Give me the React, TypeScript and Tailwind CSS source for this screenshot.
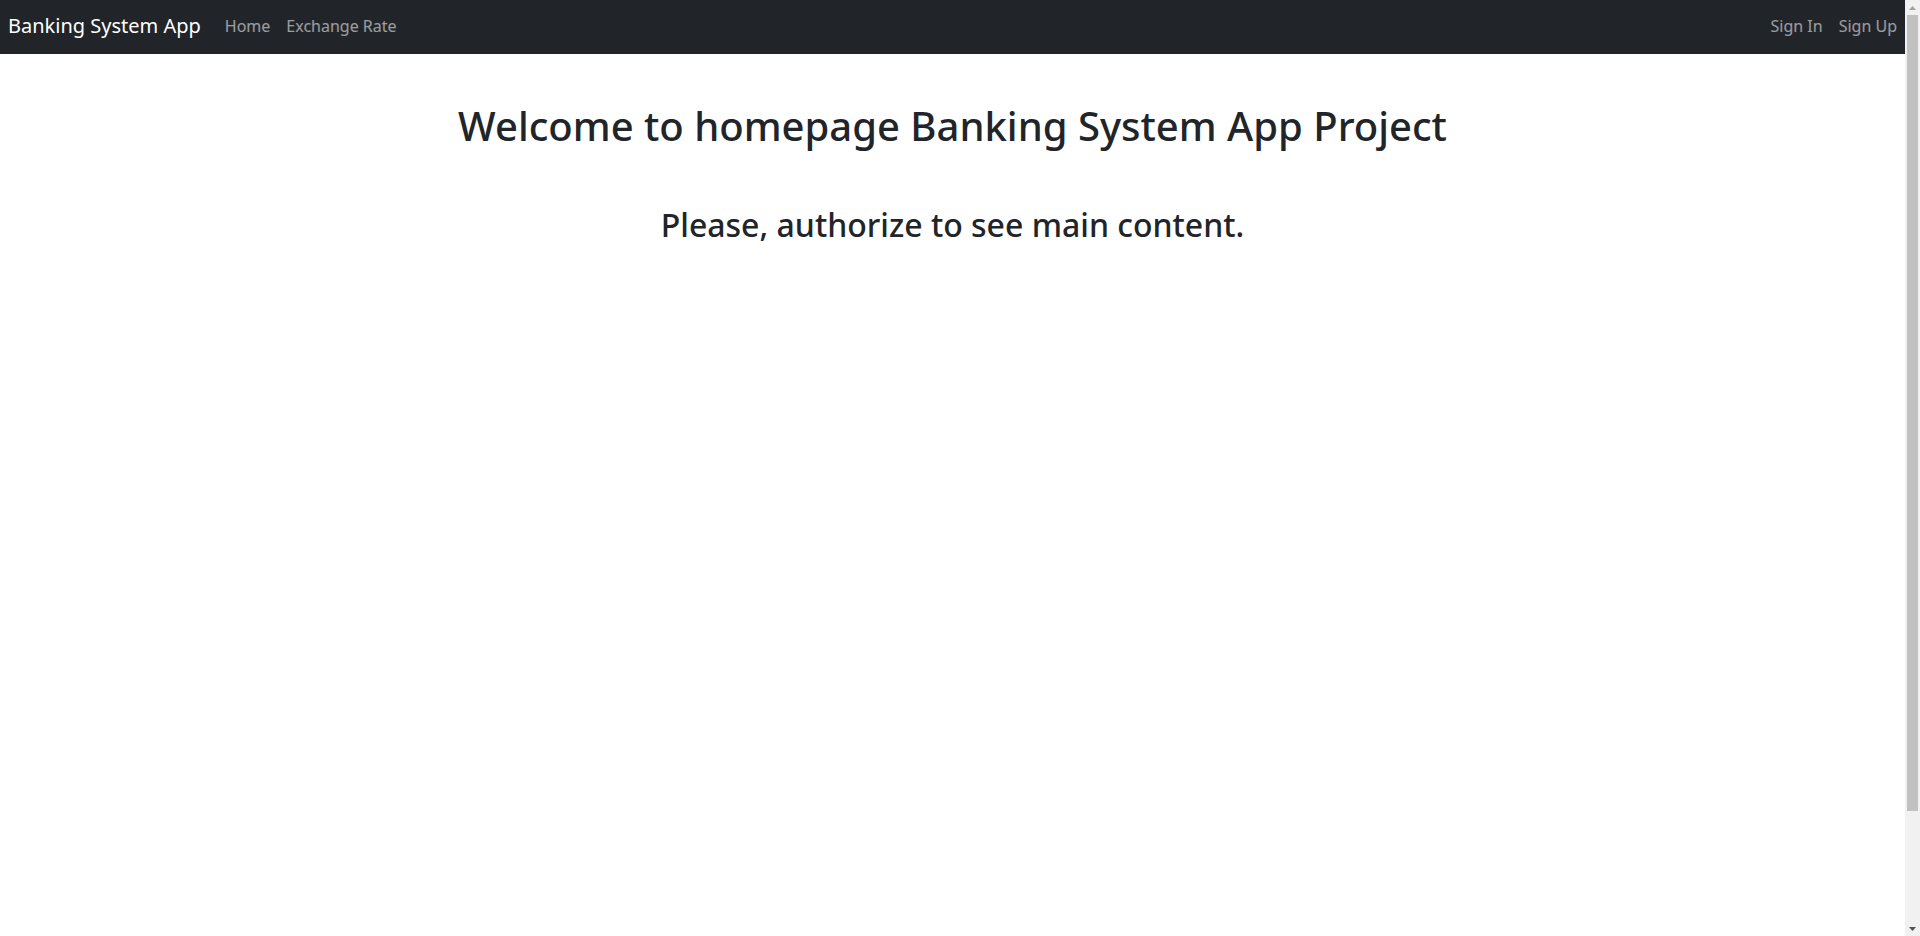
function Scrollbar() {
  return (
    <div className="w-[15px] h-screen shrink-0 bg-[#f1f1f1] flex flex-col">
      <div className="h-[15px] flex items-center justify-center">
        <svg width="7" height="4" viewBox="0 0 7 4"><path d="M3.5 0 L7 4 L0 4 Z" fill="#a3a3a3" /></svg>
      </div>
      <div className="flex-1 px-[2px]">
        <div className="h-[796px] bg-[#c1c1c1]" />
      </div>
      <div className="h-[15px] flex items-center justify-center">
        <svg width="7" height="4" viewBox="0 0 7 4"><path d="M0 0 L7 0 L3.5 4 Z" fill="#505050" /></svg>
      </div>
    </div>
  );
}

export default function App() {
  return (
    <div className="h-screen flex bg-white text-[#212529] overflow-hidden" style={{ fontFamily: '"Noto Sans", "Liberation Sans", sans-serif' }}>
      <div className="flex-1 min-w-0">
        <nav className="h-[54px] bg-[#212529] flex items-center justify-between px-2 pb-0.5">
          <div className="flex items-center">
            <a href="#" className="text-white text-[20px] mr-4 leading-[30px]">Banking System App</a>
            <a href="#" className="text-white/55 text-base px-2">Home</a>
            <a href="#" className="text-white/55 text-base px-2">Exchange Rate</a>
          </div>
          <div className="flex items-center">
            <a href="#" className="text-white/55 text-base px-2">Sign In</a>
            <a href="#" className="text-white/55 text-base pl-2">Sign Up</a>
          </div>
        </nav>
        <main className="text-center">
          <h1 className="mt-12 text-[40px] leading-[1.2] font-medium">Welcome to homepage Banking System App Project</h1>
          <h2 className="mt-14 text-[32px] leading-[1.2] font-medium">Please, authorize to see main content.</h2>
        </main>
      </div>
      <Scrollbar />
    </div>
  );
}
